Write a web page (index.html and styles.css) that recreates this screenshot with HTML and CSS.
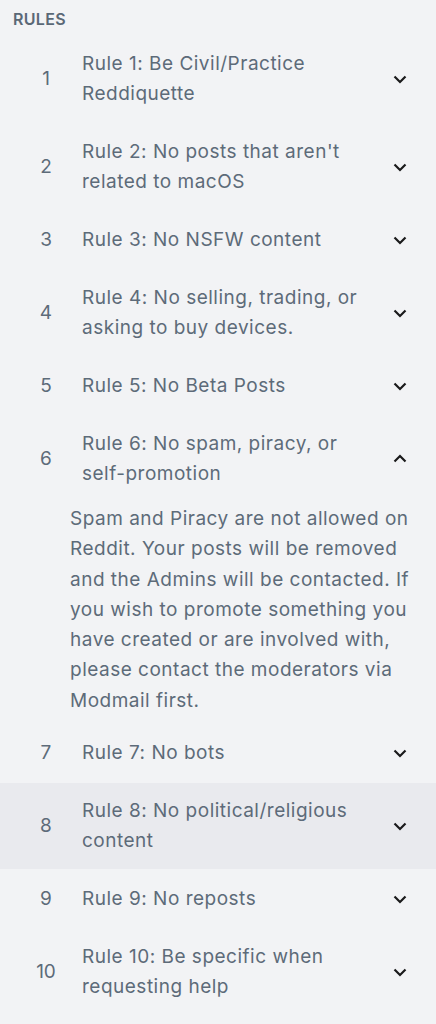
FILE: index.html
```html
<!DOCTYPE html>
<html lang="en">
<head>
<meta charset="utf-8">
<title>Rules</title>
<link rel="stylesheet" href="styles.css">
</head>
<body>
<section class="rules">
  <h2 class="rules-title">RULES</h2>
  <ol class="rule-list">
    <li class="rule rule-first">
      <span class="rule-num">1</span>
      <span class="rule-text">Rule 1: Be Civil/Practice Reddiquette</span>
      <span class="rule-icon"><svg viewBox="0 0 16 16" width="16" height="16"><path d="M2.5 5.5 8 11 13.5 5.5" fill="none" stroke="#1a1a1b" stroke-width="2.2"/></svg></span>
    </li>
    <li class="rule">
      <span class="rule-num">2</span>
      <span class="rule-text">Rule 2: No posts that aren't related to macOS</span>
      <span class="rule-icon"><svg viewBox="0 0 16 16" width="16" height="16"><path d="M2.5 5.5 8 11 13.5 5.5" fill="none" stroke="#1a1a1b" stroke-width="2.2"/></svg></span>
    </li>
    <li class="rule">
      <span class="rule-num">3</span>
      <span class="rule-text">Rule 3: No NSFW content</span>
      <span class="rule-icon"><svg viewBox="0 0 16 16" width="16" height="16"><path d="M2.5 5.5 8 11 13.5 5.5" fill="none" stroke="#1a1a1b" stroke-width="2.2"/></svg></span>
    </li>
    <li class="rule">
      <span class="rule-num">4</span>
      <span class="rule-text">Rule 4: No selling, trading, or asking to buy devices.</span>
      <span class="rule-icon"><svg viewBox="0 0 16 16" width="16" height="16"><path d="M2.5 5.5 8 11 13.5 5.5" fill="none" stroke="#1a1a1b" stroke-width="2.2"/></svg></span>
    </li>
    <li class="rule">
      <span class="rule-num">5</span>
      <span class="rule-text">Rule 5: No Beta Posts</span>
      <span class="rule-icon"><svg viewBox="0 0 16 16" width="16" height="16"><path d="M2.5 5.5 8 11 13.5 5.5" fill="none" stroke="#1a1a1b" stroke-width="2.2"/></svg></span>
    </li>
    <li class="rule-group">
      <div class="rule">
        <span class="rule-num">6</span>
        <span class="rule-text">Rule 6: No spam, piracy, or <span class="nowrap">self-promotion</span></span>
        <span class="rule-icon"><svg viewBox="0 0 16 16" width="16" height="16"><path d="M2.5 10.5 8 5 13.5 10.5" fill="none" stroke="#1a1a1b" stroke-width="2.2"/></svg></span>
      </div>
      <p class="rule-desc">Spam and Piracy are not allowed on Reddit. Your posts will be removed and the Admins will be contacted. If you wish to promote something you have created or are involved with, please contact the moderators via Modmail first.</p>
    </li>
    <li class="rule">
      <span class="rule-num">7</span>
      <span class="rule-text">Rule 7: No bots</span>
      <span class="rule-icon"><svg viewBox="0 0 16 16" width="16" height="16"><path d="M2.5 5.5 8 11 13.5 5.5" fill="none" stroke="#1a1a1b" stroke-width="2.2"/></svg></span>
    </li>
    <li class="rule rule-hover">
      <span class="rule-num">8</span>
      <span class="rule-text">Rule 8: No political/religious content</span>
      <span class="rule-icon"><svg viewBox="0 0 16 16" width="16" height="16"><path d="M2.5 5.5 8 11 13.5 5.5" fill="none" stroke="#1a1a1b" stroke-width="2.2"/></svg></span>
    </li>
    <li class="rule">
      <span class="rule-num">9</span>
      <span class="rule-text">Rule 9: No reposts</span>
      <span class="rule-icon"><svg viewBox="0 0 16 16" width="16" height="16"><path d="M2.5 5.5 8 11 13.5 5.5" fill="none" stroke="#1a1a1b" stroke-width="2.2"/></svg></span>
    </li>
    <li class="rule">
      <span class="rule-num">10</span>
      <span class="rule-text">Rule 10: Be specific when requesting help</span>
      <span class="rule-icon"><svg viewBox="0 0 16 16" width="16" height="16"><path d="M2.5 5.5 8 11 13.5 5.5" fill="none" stroke="#1a1a1b" stroke-width="2.2"/></svg></span>
    </li>
  </ol>
</section>
</body>
</html>
```

FILE: styles.css
```css
html, body {
  margin: 0;
  padding: 0;
  background: #f2f3f5;
}

body {
  font-family: Inter, "Noto Sans", "Liberation Sans", sans-serif;
  color: #5d6b79;
}

.rules {
  padding-top: 8.5px;
}

.rules-title {
  margin: 0 0 14px 13px;
  font-size: 16px;
  line-height: 20px;
  font-weight: 600;
  letter-spacing: 0.3px;
  color: #5a6876;
}

.rule-list {
  list-style: none;
  margin: 0;
  padding: 0;
}

.rule {
  display: flex;
  align-items: center;
  min-height: 60px;
  padding: 6.5px 16px 6.5px 30px;
  font-size: 19px;
  letter-spacing: 0.5px;
  line-height: 30px;
}

.rule-first {
  margin-bottom: 15px;
}

.rule-hover {
  background: #e9eaee;
  padding-top: 13px;
  padding-bottom: 13px;
  margin: -6.5px 0;
}

.rule-num {
  width: 32px;
  flex: none;
  text-align: center;
  margin-right: 20px;
  letter-spacing: 0;
}

.rule-text {
  flex: 1;
  min-width: 0;
}

.nowrap {
  white-space: nowrap;
}

.rule-icon {
  flex: none;
  width: 40px;
  display: flex;
  justify-content: center;
  align-items: center;
  margin-left: 10px;
}

.rule-icon svg {
  display: block;
}

.rule-desc {
  margin: 8.5px 0 0;
  padding: 0 20px 0 70px;
  font-size: 19px;
  letter-spacing: 0.5px;
  line-height: 30.3px;
}
```
